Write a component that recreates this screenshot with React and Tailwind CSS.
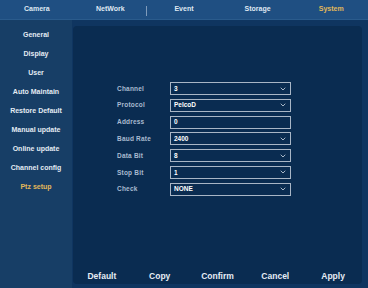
import { ChevronDown } from 'lucide-react';

const tabs = ['Camera', 'NetWork', 'Event', 'Storage', 'System'];
const menu = ['General', 'Display', 'User', 'Auto Maintain', 'Restore Default', 'Manual update', 'Online update', 'Channel config', 'Ptz setup'];
const fields = [
  { label: 'Channel', value: '3', select: true },
  { label: 'Protocol', value: 'PelcoD', select: true },
  { label: 'Address', value: '0' },
  { label: 'Baud Rate', value: '2400', select: true },
  { label: 'Data Bit', value: '8', select: true },
  { label: 'Stop Bit', value: '1', select: true },
  { label: 'Check', value: 'NONE', select: true },
];
const actions = ['Default', 'Copy', 'Confirm', 'Cancel', 'Apply'];

export default function App() {
  return (
    <div className="w-[368px] h-[288px] overflow-hidden bg-[#143b64] flex flex-col font-['Liberation_Sans',Arial,sans-serif] font-bold">
      {/* top tabs */}
      <div className="h-[20px] bg-[#1f4f82] flex items-center border-b border-[#2a5b8c]">
        {tabs.map((t, i) => (
          <div key={t} className="flex-1 relative flex items-center justify-center h-full">
            <span className={`text-[7px] ${t === 'System' ? 'text-[#e0b85a]' : 'text-[#dfe8f2]'}`}>{t}</span>
            {i === 1 && <div className="absolute right-0 top-[6px] w-px h-[10px] bg-[#7f9bbb]" />}
          </div>
        ))}
      </div>

      <div className="flex-1 flex">
        {/* side menu */}
        <div className="w-[72px] bg-[#173e66] flex flex-col pt-[6px]">
          {menu.map((m) => (
            <div
              key={m}
              className={`h-[19px] flex items-center justify-center text-[7px] ${m === 'Ptz setup' ? 'text-[#e2b75a]' : 'text-[#e4ebf3]'}`}
            >
              {m}
            </div>
          ))}
        </div>

        {/* content panel */}
        <div className="flex-1 pt-[6px] pr-[6px] pb-[4px] pl-[1px] bg-[#0f3560]">
          <div className="h-full rounded-[4px] bg-[#0a2c51] flex flex-col">
            <div className="flex-1 flex flex-col pt-[56px] pl-[44px] gap-[3.8px]">
              {fields.map((f) => (
                <div key={f.label} className="flex items-center h-[13px]">
                  <span className="w-[53px] text-[6.5px] text-[#a9bbd0] tracking-[0.2px]">{f.label}</span>
                  <div className="w-[121px] h-[13px] border border-[#a9b6c6] flex items-center justify-between px-[3px]">
                    <span className="text-[6.5px] text-white">{f.value}</span>
                    {f.select && <ChevronDown className="w-[8px] h-[8px] text-[#c9d4e0]" strokeWidth={2.5} />}
                  </div>
                </div>
              ))}
            </div>
            <div className="h-[13px] flex items-start">
              {actions.map((a) => (
                <div key={a} className="flex-1 text-center text-[8.5px] leading-[10px] text-[#e6edf5]">
                  {a}
                </div>
              ))}
            </div>
          </div>
        </div>
      </div>
    </div>
  );
}
